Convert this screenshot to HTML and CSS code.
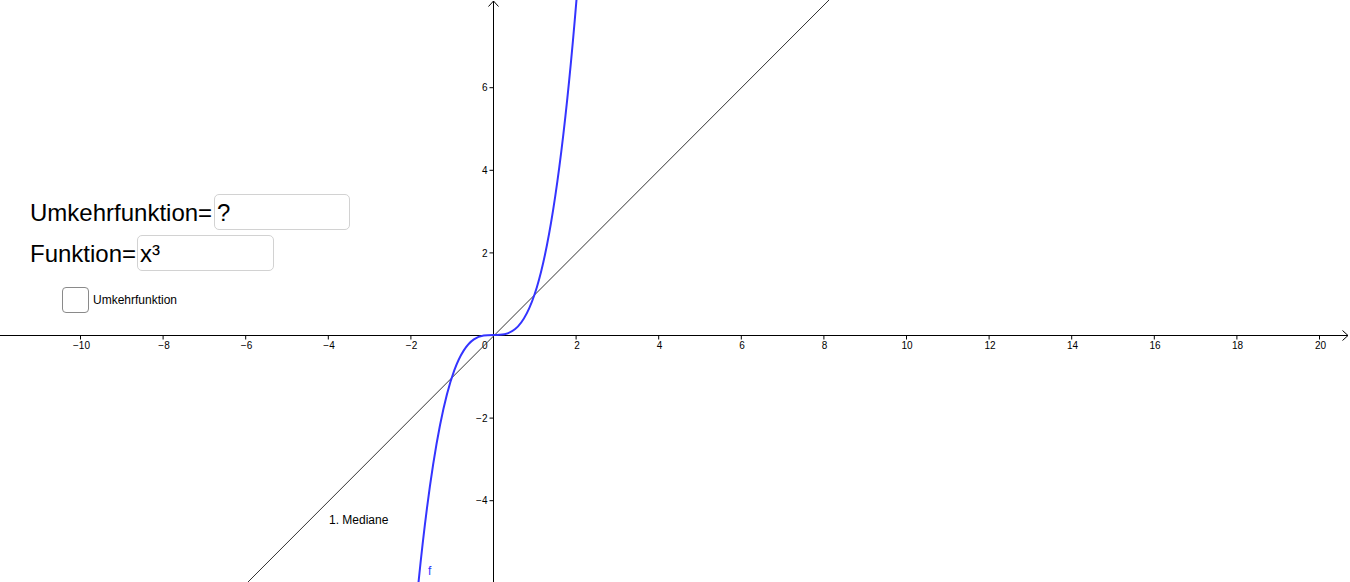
FILE: index.html
```html
<!DOCTYPE html>
<html lang="de">
<head>
<meta charset="utf-8">
<title>Umkehrfunktion</title>
<link rel="stylesheet" href="styles.css">
</head>
<body>
<div class="board">
  <svg class="graph" width="1350" height="582" viewBox="0 0 1350 582" xmlns="http://www.w3.org/2000/svg">
    <!-- axes -->
    <g class="axes">
      <line x1="0" y1="335.5" x2="1348" y2="335.5"/>
      <polyline points="1342.5,330.5 1348,335.5 1342.5,340.5"/>
      <line x1="493.5" y1="1" x2="493.5" y2="582"/>
      <polyline points="488.5,6.5 493.5,1 498.5,6.5"/>
      <!-- x ticks -->
      <line x1="80.5" y1="335.5" x2="80.5" y2="339.5"/>
      <line x1="163.1" y1="335.5" x2="163.1" y2="339.5"/>
      <line x1="245.7" y1="335.5" x2="245.7" y2="339.5"/>
      <line x1="328.3" y1="335.5" x2="328.3" y2="339.5"/>
      <line x1="410.9" y1="335.5" x2="410.9" y2="339.5"/>
      <line x1="576.1" y1="335.5" x2="576.1" y2="339.5"/>
      <line x1="658.7" y1="335.5" x2="658.7" y2="339.5"/>
      <line x1="741.3" y1="335.5" x2="741.3" y2="339.5"/>
      <line x1="823.9" y1="335.5" x2="823.9" y2="339.5"/>
      <line x1="906.5" y1="335.5" x2="906.5" y2="339.5"/>
      <line x1="989.1" y1="335.5" x2="989.1" y2="339.5"/>
      <line x1="1071.7" y1="335.5" x2="1071.7" y2="339.5"/>
      <line x1="1154.3" y1="335.5" x2="1154.3" y2="339.5"/>
      <line x1="1236.9" y1="335.5" x2="1236.9" y2="339.5"/>
      <line x1="1319.5" y1="335.5" x2="1319.5" y2="339.5"/>
      <!-- y ticks -->
      <line x1="489.5" y1="87.7" x2="493.5" y2="87.7"/>
      <line x1="489.5" y1="170.3" x2="493.5" y2="170.3"/>
      <line x1="489.5" y1="252.9" x2="493.5" y2="252.9"/>
      <line x1="489.5" y1="418.1" x2="493.5" y2="418.1"/>
      <line x1="489.5" y1="500.7" x2="493.5" y2="500.7"/>
    </g>
    <g class="xlabels">
      <text x="81.5" y="348.5">−10</text>
      <text x="164" y="348.5">−8</text>
      <text x="246.5" y="348.5">−6</text>
      <text x="329" y="348.5">−4</text>
      <text x="411.5" y="348.5">−2</text>
      <text x="577" y="348.5">2</text>
      <text x="659.5" y="348.5">4</text>
      <text x="742" y="348.5">6</text>
      <text x="824.5" y="348.5">8</text>
      <text x="907" y="348.5">10</text>
      <text x="990" y="348.5">12</text>
      <text x="1072.5" y="348.5">14</text>
      <text x="1155" y="348.5">16</text>
      <text x="1237.5" y="348.5">18</text>
      <text x="1320.5" y="348.5">20</text>
    </g>
    <g class="ylabels">
      <text x="487.5" y="348.5">0</text>
      <text x="487.5" y="91.3">6</text>
      <text x="487.5" y="173.9">4</text>
      <text x="487.5" y="256.5">2</text>
      <text x="487.5" y="421.7">−2</text>
      <text x="487.5" y="504.3">−4</text>
    </g>
    <!-- 1. Mediane y = x -->
    <line class="median" x1="248" y1="582" x2="829" y2="0"/>
    <!-- f(x) = x^3 as exact cubic Bezier -->
    <path class="curve" d="M415.03,618.28 C470.10,21.90 525.16,681.05 580.23,-47.48"/>
    <text class="lbl" x="329" y="524">1. Mediane</text>
    <text class="lbl flabel" x="428" y="575">f</text>
  </svg>

  <div class="panel">
    <div class="row">
      <span class="big">Umkehrfunktion=</span>
      <div class="field wide">?</div>
    </div>
    <div class="row">
      <span class="big">Funktion=</span>
      <div class="field">x³</div>
    </div>
    <label class="check">
      <span class="box"></span>
      <span class="small">Umkehrfunktion</span>
    </label>
  </div>
</div>
</body>
</html>
```

FILE: styles.css
```css
html, body {
  margin: 0;
  padding: 0;
  background: #ffffff;
  overflow: hidden;
}

.board {
  position: relative;
  width: 1350px;
  height: 582px;
  font-family: "Liberation Sans", Arial, sans-serif;
  color: #000;
}

.graph {
  display: block;
}

.axes line,
.axes polyline {
  stroke: #000;
  stroke-width: 1;
  fill: none;
}

.xlabels text,
.ylabels text {
  font-family: "Liberation Sans", Arial, sans-serif;
  font-size: 10px;
  fill: #000;
}

.xlabels text {
  text-anchor: middle;
}

.ylabels text {
  text-anchor: end;
}

.median {
  stroke: #333333;
  stroke-width: 1;
}

.curve {
  stroke: #3434ff;
  stroke-width: 2;
  fill: none;
}

.lbl {
  font-family: "Liberation Sans", Arial, sans-serif;
  font-size: 12px;
  fill: #000;
}

.flabel {
  fill: #3434ff;
}

.panel {
  position: absolute;
  left: 30px;
  top: 194px;
  display: flex;
  flex-direction: column;
  gap: 5px;
}

.row {
  display: flex;
  align-items: center;
  gap: 1px;
  height: 36px;
}

.big {
  font-size: 24px;
  line-height: 36px;
  padding-top: 2px;
}

.field {
  box-sizing: border-box;
  width: 137px;
  height: 36px;
  border: 1.5px solid #d2d2d2;
  border-radius: 5px;
  font-size: 24px;
  line-height: 36px;
  padding-left: 2px;
  background: #fff;
}

.field.wide {
  width: 136px;
  margin-left: 1px;
}

.check {
  display: flex;
  align-items: center;
  gap: 4px;
  margin-top: 11px;
  margin-left: 32px;
}

.box {
  box-sizing: border-box;
  width: 27px;
  height: 26px;
  border: 1px solid #8a8a8a;
  border-radius: 4px;
  background: #fff;
}

.small {
  font-size: 12px;
}
```
